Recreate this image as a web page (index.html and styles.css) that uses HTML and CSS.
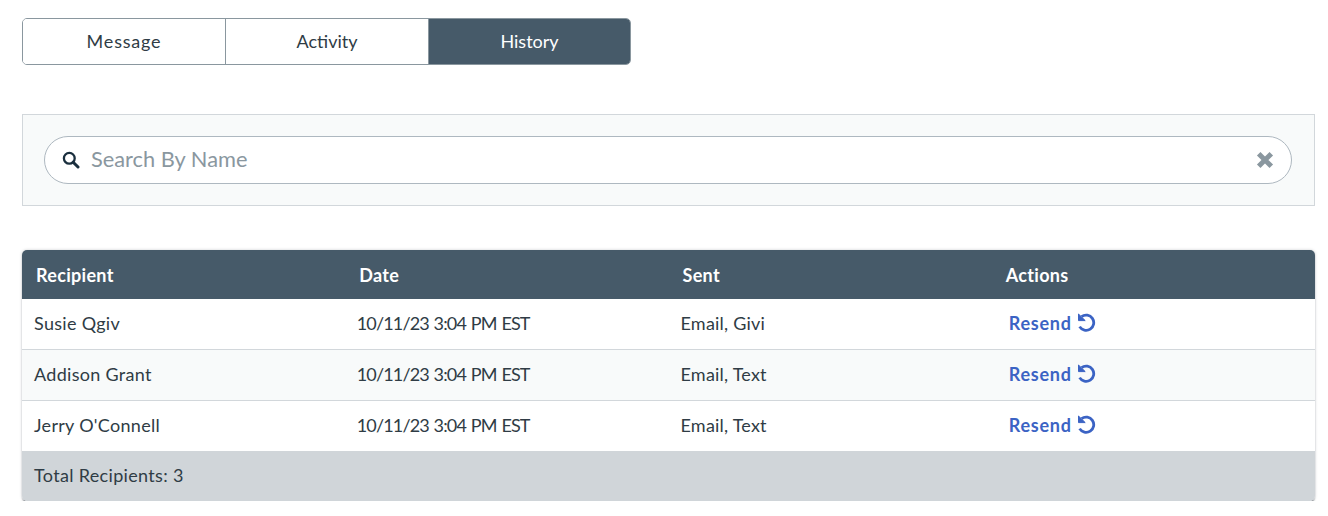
FILE: index.html
```html
<!DOCTYPE html>
<html lang="en">
<head>
<meta charset="utf-8">
<title>History</title>
<link rel="stylesheet" href="styles.css">
</head>
<body>
<main class="page">
  <nav class="tabs">
    <button class="tab tab-wide">Message</button>
    <button class="tab">Activity</button>
    <button class="tab tab-active">History</button>
  </nav>
  <section class="search-panel">
    <div class="search">
      <svg class="search-icon" viewBox="0 0 18 18" aria-hidden="true"><circle cx="7.3" cy="7.3" r="5.4" fill="none" stroke="#1a2f3e" stroke-width="2.3"/><path d="M11.2 11.2L16 16" stroke="#1a2f3e" stroke-width="3" stroke-linecap="round"/></svg>
      <span class="placeholder">Search By Name</span>
      <svg class="clear-icon" viewBox="0 0 16 16" aria-hidden="true"><path d="M2.4 2.4L13.6 13.6M13.6 2.4L2.4 13.6" stroke="#8a979f" stroke-width="4.4"/></svg>
    </div>
  </section>
  <section class="table">
    <div class="row head"><div>Recipient</div><div>Date</div><div>Sent</div><div>Actions</div></div>
    <div class="row body">
      <div class="name">Susie Qgiv</div><div class="date">10/11/23 3:04 PM EST</div><div>Email, Givi</div>
      <div class="action"><a class="resend">Resend<svg class="resend-icon" viewBox="0 0 20 19" aria-hidden="true"><path d="M1.5 1L1.5 7.6L8.2 7.6Z" fill="#3b63c4" stroke="#3b63c4" stroke-width="1" stroke-linejoin="round"/><path d="M4.6 3.6A7.6 7.6 0 1 1 2.6 13.6" fill="none" stroke="#3b63c4" stroke-width="2.8"/></svg></a></div>
    </div>
    <div class="row body alt">
      <div class="name">Addison Grant</div><div class="date">10/11/23 3:04 PM EST</div><div>Email, Text</div>
      <div class="action"><a class="resend">Resend<svg class="resend-icon" viewBox="0 0 20 19" aria-hidden="true"><path d="M1.5 1L1.5 7.6L8.2 7.6Z" fill="#3b63c4" stroke="#3b63c4" stroke-width="1" stroke-linejoin="round"/><path d="M4.6 3.6A7.6 7.6 0 1 1 2.6 13.6" fill="none" stroke="#3b63c4" stroke-width="2.8"/></svg></a></div>
    </div>
    <div class="row body">
      <div class="name">Jerry O'Connell</div><div class="date">10/11/23 3:04 PM EST</div><div>Email, Text</div>
      <div class="action"><a class="resend">Resend<svg class="resend-icon" viewBox="0 0 20 19" aria-hidden="true"><path d="M1.5 1L1.5 7.6L8.2 7.6Z" fill="#3b63c4" stroke="#3b63c4" stroke-width="1" stroke-linejoin="round"/><path d="M4.6 3.6A7.6 7.6 0 1 1 2.6 13.6" fill="none" stroke="#3b63c4" stroke-width="2.8"/></svg></a></div>
    </div>
    <div class="foot">Total Recipients: 3</div>
  </section>
</main>
</body>
</html>
```
FILE: styles.css
```css
* { box-sizing: border-box; }
html, body { margin: 0; background: #fff; }
body { font-family: "Lato", "Noto Sans", sans-serif; font-size: 18px; color: #2f3c45; overflow: hidden; }
.page { padding: 18px 13px 0 22px; }
.tabs { display: flex; width: 609px; height: 47px; border: 1px solid #8a979f; border-radius: 5px; overflow: hidden; }
.tab { flex: 0 0 203px; border: 0; border-right: 1px solid #8a979f; background: #fff; font: inherit; color: #2f3c45; padding: 0 0 2px; }
.tab-wide { letter-spacing: .8px; }
.tab-active { flex: 1 1 0; background: #465a69; color: #fff; border-right: 0; }
.search-panel { margin-top: 49px; height: 92px; padding: 21px 22px 21px 21px; border: 1px solid #d2d7db; background: #f8fafa; }
.search { display: flex; align-items: center; height: 48px; border: 1px solid #aeb8c0; border-radius: 24px; background: #fff; padding: 0 17px; font-size: 21.8px; }
.search-icon { width: 18px; height: 18px; flex: none; }
.placeholder { flex: 1; margin-left: 11px; color: #8a979f; padding-bottom: 3px; }
.clear-icon { width: 18px; height: 18px; flex: none; }
.table { margin-top: 44px; border-radius: 5px; overflow: hidden; box-shadow: 0 2px 2px -1px rgba(40,50,60,.7), 0 0 3px rgba(40,50,60,.25); }
.row { display: grid; grid-template-columns: repeat(4, 1fr); align-items: center; }
.head { height: 49px; background: #465a69; color: #fff; font-weight: 700; letter-spacing: .3px; }
.head > div { padding-left: 14px; }
.body { height: 51px; background: #fff; border-bottom: 1px solid #d2d7db; letter-spacing: .22px; }
.body > div { padding-left: 12px; padding-bottom: 3px; }
.body:nth-of-type(4) { border-bottom: 0; height: 50px; }
.body > .name { letter-spacing: .3px; }
.alt { background: #f8fafa; }
.body > .date { letter-spacing: -.85px; word-spacing: 1px; padding-left: 11.5px; }
.body > .action { padding-left: 17px; padding-bottom: 2px; }
.resend { display: inline-flex; align-items: center; gap: 5px; color: #3b63c4; font-weight: 700; letter-spacing: .75px; }
.resend-icon { width: 20px; height: 19px; margin-top: -2px; }
.foot { height: 50px; background: #d0d5d9; padding: 0 0 2px 12px; display: flex; align-items: center; letter-spacing: .33px; }
```
